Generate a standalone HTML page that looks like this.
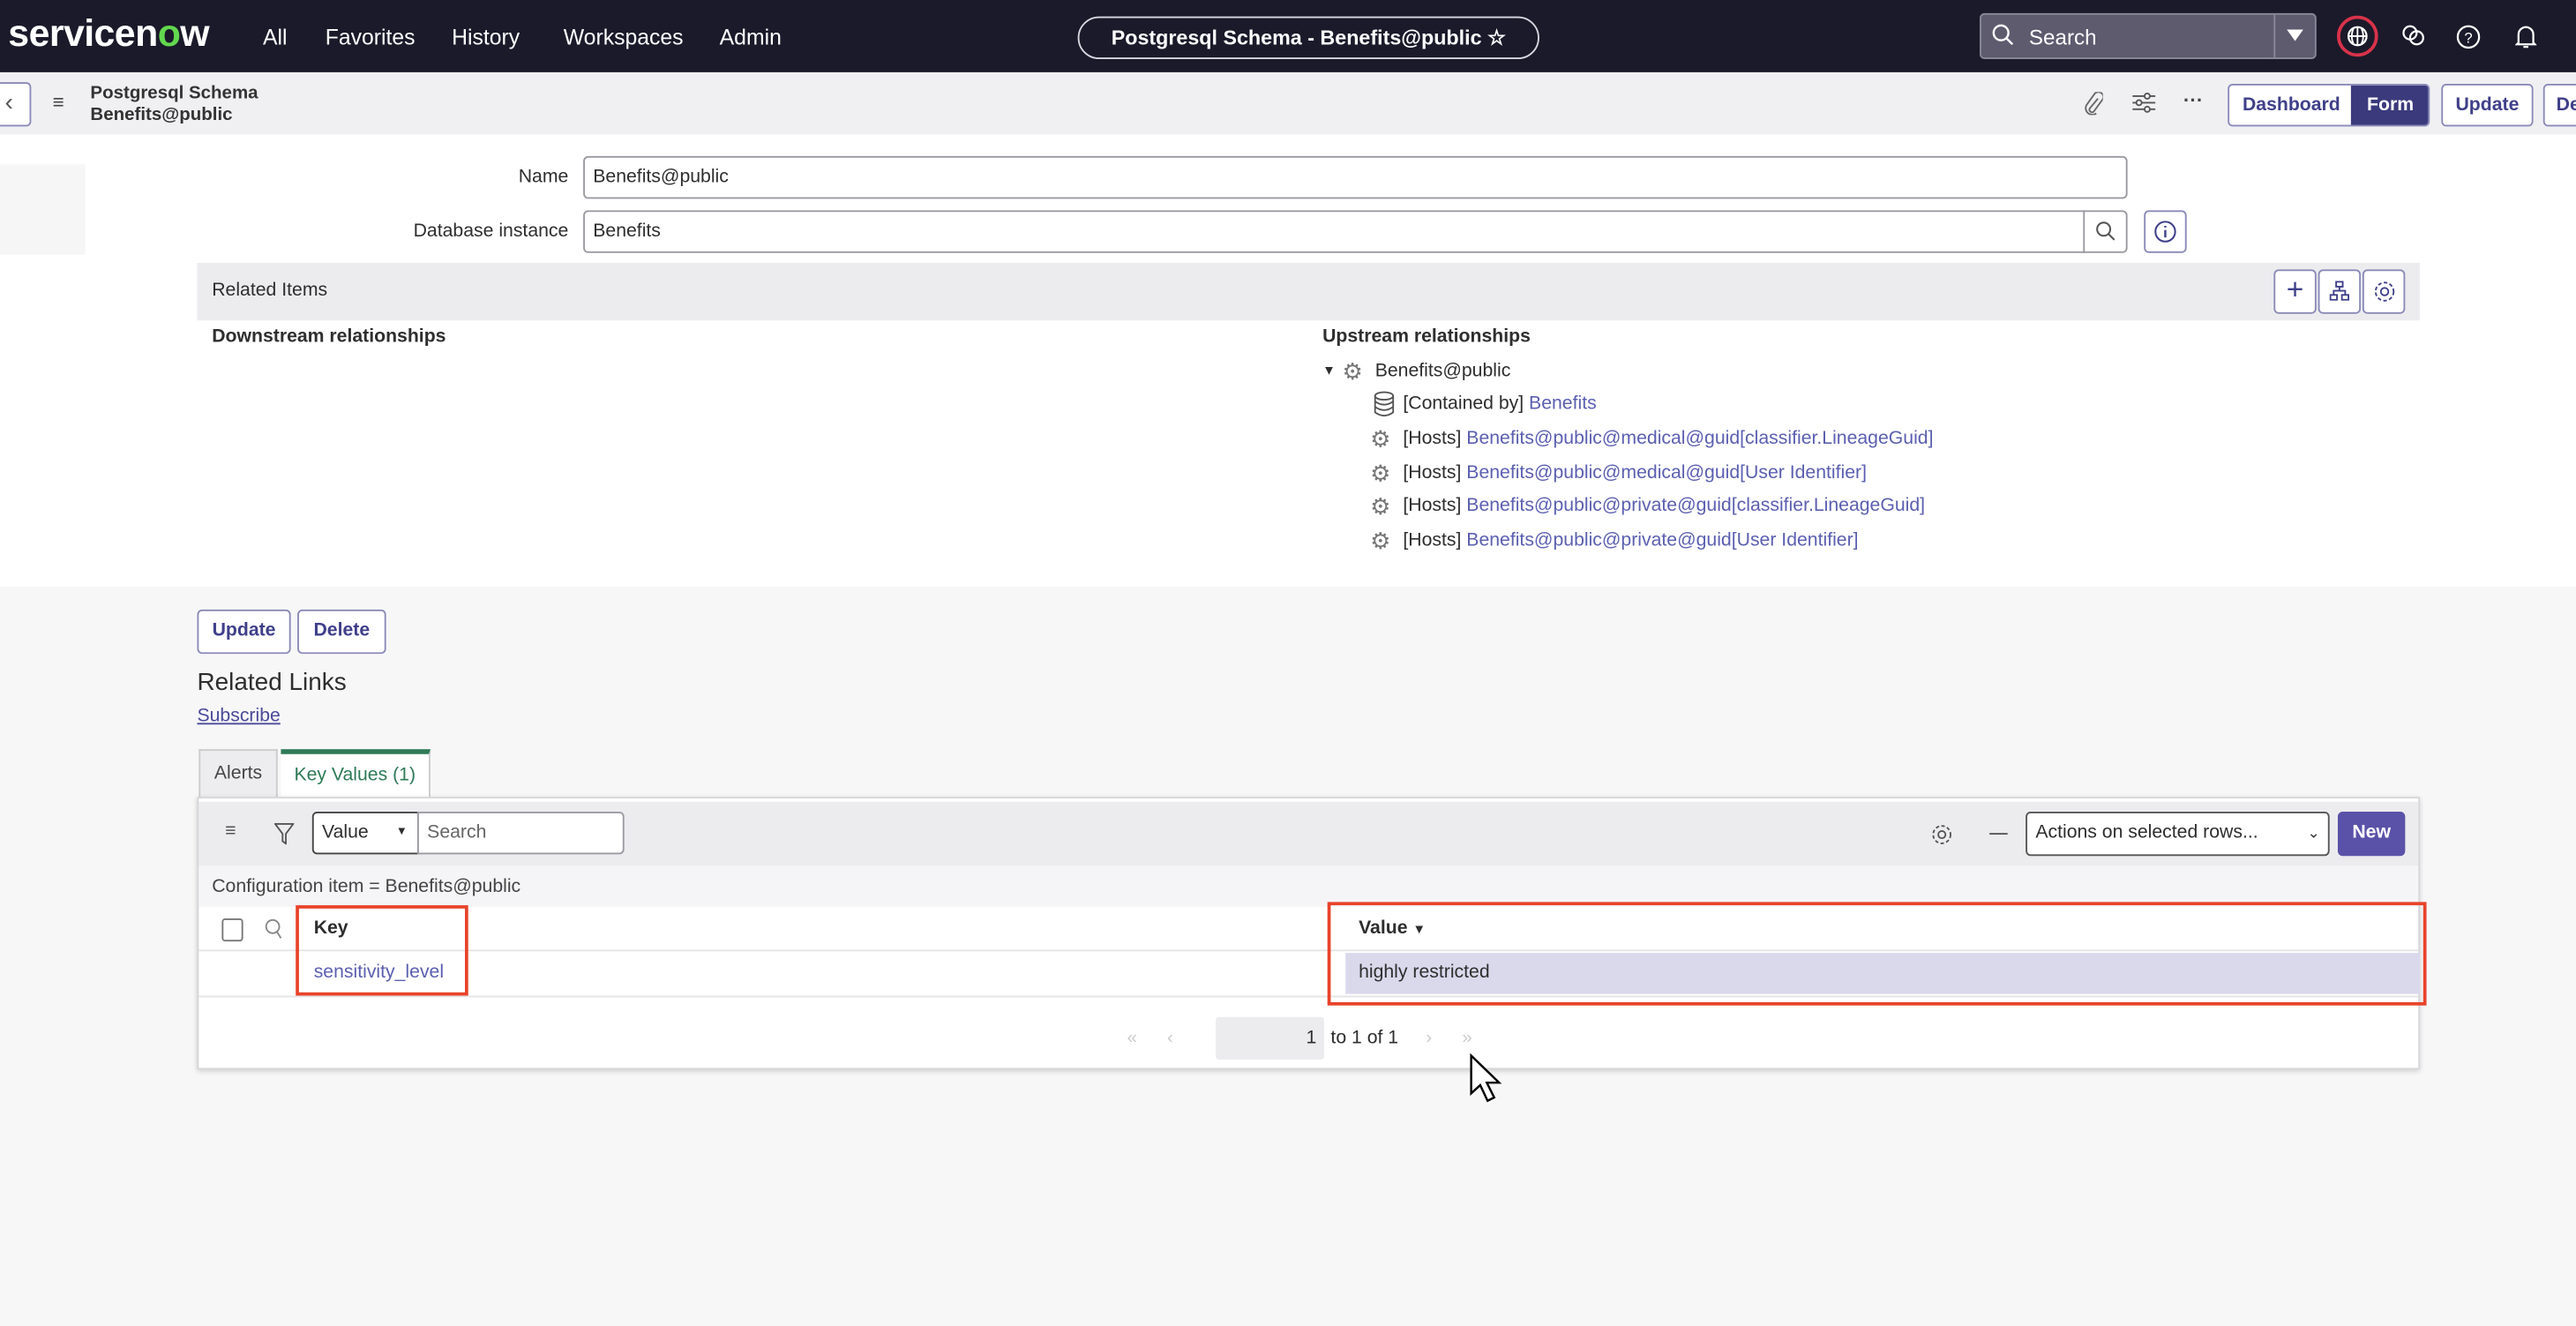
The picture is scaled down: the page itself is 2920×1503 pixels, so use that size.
<!DOCTYPE html>
<html><head><meta charset="utf-8"><style>
*{box-sizing:border-box;margin:0;padding:0}
html,body{width:2920px;height:1502px;overflow:hidden;background:#f7f7f8}
#s{position:absolute;left:0;top:0;width:1568px;height:807px;transform:scale(1.86225);transform-origin:0 0;font-family:"Liberation Sans",Arial,sans-serif;font-size:11.4px;color:#2e2e2e;background:#f7f7f8}
.a{position:absolute}
.lnk{color:#5b5fb0}
.btn{position:absolute;border:1px solid #8a8ab8;border-radius:3px;background:#fff;color:#3f3f8a;font-weight:bold;font-size:11.4px;text-align:center}
.inp{position:absolute;border:1px solid #9a9aa2;border-radius:3px;background:#fff;padding-left:5px}
svg{position:absolute}
.g{position:absolute;font-size:14px;color:#777}
</style></head><body><div id="s">
<div class="a" style="left:0;top:0;width:1568px;height:44px;background:#1b1a2a"></div>
<div class="a" style="left:5px;top:7px;color:#fff;font-size:23px;font-weight:bold;letter-spacing:-0.3px">servicen<span style="color:#62d84e">o</span>w</div>
<div class="a" style="top:15px;color:#fff;font-size:13.3px;left:160px">All</div>
<div class="a" style="top:15px;color:#fff;font-size:13.3px;left:198px">Favorites</div>
<div class="a" style="top:15px;color:#fff;font-size:13.3px;left:275px">History</div>
<div class="a" style="top:15px;color:#fff;font-size:13.3px;left:343px">Workspaces</div>
<div class="a" style="top:15px;color:#fff;font-size:13.3px;left:438px">Admin</div>
<div class="a" style="left:656px;top:10px;width:281px;height:26px;border:1px solid #d8d8e0;border-radius:13px;color:#fff;font-weight:bold;font-size:12.5px;text-align:center;line-height:24px">Postgresql Schema - Benefits@public ☆</div>
<div class="a" style="left:1205px;top:8px;width:205px;height:28px;background:#5e5b6f;border:1px solid #8a879a;border-radius:3px"></div>
<div class="a" style="left:1384px;top:9px;width:1px;height:26px;background:#8a879a"></div>
<div class="a" style="left:1235px;top:15px;color:#fff;font-size:13px">Search</div>
<svg style="left:1212px;top:14px" width="14" height="14"><circle cx="6" cy="6" r="4.5" fill="none" stroke="#fff" stroke-width="1.3"/><path d="M9.5 9.5 13 13" stroke="#fff" stroke-width="1.3"/></svg>
<svg style="left:1392px;top:18px" width="10" height="8"><path d="M0 0h10L5 7z" fill="#fff"/></svg>
<svg style="left:1422px;top:9px" width="26" height="26"><circle cx="13" cy="13" r="11.5" fill="none" stroke="#d8334a" stroke-width="2"/><circle cx="13" cy="13" r="5.5" fill="none" stroke="#fff" stroke-width="1.2"/><path d="M7.5 13h11M13 7.5v11M10.5 8.5q-2 4.5 0 9M15.5 8.5q2 4.5 0 9" fill="none" stroke="#fff" stroke-width="1"/></svg>
<svg style="left:1462px;top:15px" width="14" height="14"><circle cx="5" cy="5" r="4" fill="none" stroke="#fff" stroke-width="1.2"/><circle cx="9" cy="8" r="4" fill="none" stroke="#fff" stroke-width="1.2"/></svg>
<svg style="left:1495px;top:15px" width="15" height="15"><circle cx="7.5" cy="7.5" r="6.5" fill="none" stroke="#fff" stroke-width="1.2"/><text x="7.5" y="11" font-size="9" fill="#fff" text-anchor="middle" font-family="Liberation Sans">?</text></svg>
<svg style="left:1531px;top:15px" width="13" height="15"><path d="M2 11V6a4.5 4.5 0 0 1 9 0v5l1 1H1zM5 13.5h3" fill="none" stroke="#fff" stroke-width="1.2"/></svg>
<div class="a" style="left:0;top:44px;width:1568px;height:38px;background:#f0f0f3"></div>
<div class="a" style="left:-4px;top:50px;width:23px;height:27px;border:1px solid #8a8ab8;border-radius:3px;background:#fff"></div>
<div class="a" style="left:3px;top:54px;font-size:15px;color:#555">‹</div>
<div class="a" style="left:32px;top:55px;font-size:12px;color:#444">≡</div>
<div class="a" style="left:55px;top:51px;font-size:11px;font-weight:bold;color:#333;line-height:13px">Postgresql Schema<br>Benefits@public</div>
<svg style="left:1268px;top:56px" width="12" height="14"><path d="M9 4 4 10a1.6 1.6 0 0 0 2.4 2L11.5 5A3 3 0 0 0 7 1L2 8a4 4 0 0 0 6 5" fill="none" stroke="#666" stroke-width="1"/></svg>
<svg style="left:1298px;top:56px" width="14" height="13"><path d="M0 2.5h14M0 6.5h14M0 10.5h14" stroke="#555" stroke-width="1"/><circle cx="9" cy="2.5" r="1.6" fill="#f0f0f3" stroke="#555"/><circle cx="4" cy="6.5" r="1.6" fill="#f0f0f3" stroke="#555"/><circle cx="9" cy="10.5" r="1.6" fill="#f0f0f3" stroke="#555"/></svg>
<div class="a" style="left:1329px;top:54px;font-size:12px;color:#444;font-weight:bold">···</div>
<div class="btn" style="left:1356px;top:51px;width:123px;height:26px;line-height:24px;text-align:left;padding-left:8px;overflow:hidden">Dashboard<span style="position:absolute;left:74px;top:0;width:48px;height:24px;background:#3b3a7c;color:#fff;text-align:center">Form</span></div>
<div class="btn" style="left:1486px;top:51px;width:56px;height:26px;line-height:24px">Update</div>
<div class="btn" style="left:1548px;top:51px;width:40px;height:26px;line-height:24px;text-align:left;padding-left:7px">De</div>
<div class="a" style="left:0;top:82px;width:1568px;height:275px;background:#fff"></div>
<div class="a" style="left:0;top:100px;width:52px;height:55px;background:#f6f6f7"></div>
<div class="a" style="left:200px;top:102px;width:146px;text-align:right">Name</div>
<div class="inp" style="left:355px;top:95px;width:940px;height:26px;line-height:24px">Benefits@public</div>
<div class="a" style="left:200px;top:135px;width:146px;text-align:right">Database instance</div>
<div class="inp" style="left:355px;top:128px;width:940px;height:26px;line-height:24px">Benefits</div>
<div class="a" style="left:1268px;top:128px;width:1px;height:26px;background:#9a9aa2"></div>
<svg style="left:1275px;top:134px" width="13" height="13"><circle cx="5.5" cy="5.5" r="4" fill="none" stroke="#555" stroke-width="1.1"/><path d="M8.5 8.5 12 12" stroke="#555" stroke-width="1.1"/></svg>
<div class="btn" style="left:1305px;top:128px;width:26px;height:26px"></div>
<svg style="left:1311px;top:134px" width="14" height="14"><circle cx="7" cy="7" r="6" fill="none" stroke="#3f3f8a" stroke-width="1.1"/><path d="M7 6v4.5M7 3.5v1" stroke="#3f3f8a" stroke-width="1.3"/></svg>
<div class="a" style="left:120px;top:160px;width:1353px;height:35px;background:#ececef"></div>
<div class="a" style="left:129px;top:171px">Related Items</div>
<div class="btn" style="left:1384px;top:164px;width:26px;height:27px;font-size:18px;font-weight:normal;line-height:23px">+</div>
<div class="btn" style="left:1411px;top:164px;width:26px;height:27px"></div>
<svg style="left:1418px;top:171px" width="12" height="12"><rect x="4" y="0.5" width="4" height="3" fill="none" stroke="#3f3f8a"/><rect x="0.5" y="8.5" width="4" height="3" fill="none" stroke="#3f3f8a"/><rect x="7.5" y="8.5" width="4" height="3" fill="none" stroke="#3f3f8a"/><path d="M6 3.5v2.5M2.5 8.5V6h7v2.5" fill="none" stroke="#3f3f8a"/></svg>
<div class="btn" style="left:1438px;top:164px;width:26px;height:27px"></div>
<svg style="left:1444px;top:170px" width="15" height="15"><circle cx="7.5" cy="7.5" r="2.3" fill="none" stroke="#3f3f8a"/><circle cx="7.5" cy="7.5" r="5.5" fill="none" stroke="#3f3f8a" stroke-dasharray="2.2 1.4"/></svg>
<div class="a" style="left:129px;top:199px;font-weight:bold">Downstream relationships</div>
<div class="a" style="left:805px;top:199px;font-weight:bold">Upstream relationships</div>
<div class="a" style="left:805px;top:221px;font-size:8px">▼</div>
<div class="g" style="left:817px;top:218px">⚙</div>
<div class="a" style="left:837px;top:220px">Benefits@public</div>
<svg style="left:836px;top:238px" width="13" height="16"><ellipse cx="6.5" cy="3" rx="5.5" ry="2.3" fill="none" stroke="#555"/><path d="M1 3v10q5.5 4 11 0V3M1 6.3q5.5 4 11 0M1 9.6q5.5 4 11 0" fill="none" stroke="#555"/></svg>
<div class="a" style="left:854px;top:240px">[Contained by] <span class="lnk">Benefits</span></div>
<div class="g" style="left:834px;top:259px">⚙</div>
<div class="a" style="left:854px;top:261px">[Hosts] <span class="lnk">Benefits@public@medical@guid[classifier.LineageGuid]</span></div>
<div class="g" style="left:834px;top:280px">⚙</div>
<div class="a" style="left:854px;top:282px">[Hosts] <span class="lnk">Benefits@public@medical@guid[User Identifier]</span></div>
<div class="g" style="left:834px;top:300px">⚙</div>
<div class="a" style="left:854px;top:302px">[Hosts] <span class="lnk">Benefits@public@private@guid[classifier.LineageGuid]</span></div>
<div class="g" style="left:834px;top:321px">⚙</div>
<div class="a" style="left:854px;top:323px">[Hosts] <span class="lnk">Benefits@public@private@guid[User Identifier]</span></div>
<div class="btn" style="left:120px;top:371px;width:57px;height:27px;line-height:25px">Update</div>
<div class="btn" style="left:181px;top:371px;width:54px;height:27px;line-height:25px">Delete</div>
<div class="a" style="left:120px;top:407px;font-size:15px">Related Links</div>
<div class="a lnk" style="left:120px;top:430px;text-decoration:underline;color:#4a4a9a">Subscribe</div>
<div class="a" style="left:121px;top:456px;width:48px;height:30px;background:#ededf0;border:1px solid #ccc;border-bottom:none;line-height:28px;text-align:center;color:#444">Alerts</div>
<div class="a" style="left:171px;top:456px;width:91px;height:30px;background:#fff;border-top:3px solid #2f7a57;border-right:1px solid #ccc;line-height:26px;text-align:center;color:#2f7a57">Key Values (1)</div>
<div class="a" style="left:120px;top:485px;width:1353px;height:166px;background:#fff;border:1px solid #d6d6d9;box-shadow:0 1px 3px rgba(0,0,0,.18)"></div>
<div class="a" style="left:121px;top:488px;width:1351px;height:39px;background:#ececef"></div>
<div class="a" style="left:137px;top:500px;color:#555">≡</div>
<svg style="left:167px;top:501px" width="12" height="13"><path d="M0.5 0.5h11L7 6.5v6l-2-1.5V6.5z" fill="none" stroke="#555"/></svg>
<div class="inp" style="left:190px;top:494px;width:65px;height:26px;line-height:24px;border-color:#444;border-radius:3px 0 0 3px">Value<span style="position:absolute;right:6px;font-size:7px">▼</span></div>
<div class="inp" style="left:254px;top:494px;width:126px;height:26px;line-height:24px;color:#666;border-radius:0 3px 3px 0">Search</div>
<svg style="left:1175px;top:501px" width="14" height="14"><circle cx="7" cy="7" r="2.2" fill="none" stroke="#555"/><circle cx="7" cy="7" r="5.3" fill="none" stroke="#555" stroke-dasharray="2.1 1.4"/></svg>
<div class="a" style="left:1211px;top:507px;width:11px;height:1px;background:#555"></div>
<div class="inp" style="left:1233px;top:494px;width:185px;height:27px;line-height:25px;border-color:#555">Actions on selected rows...<span style="position:absolute;right:5px;font-size:9px">⌄</span></div>
<div class="a" style="left:1423px;top:494px;width:41px;height:27px;background:#5a52a8;border-radius:3px;color:#fff;font-weight:bold;text-align:center;line-height:27px">New</div>
<div class="a" style="left:121px;top:527px;width:1351px;height:25px;background:#f5f5f7"></div>
<div class="a" style="left:129px;top:534px;color:#444">Configuration item = Benefits@public</div>
<div class="a" style="left:121px;top:578px;width:1351px;height:1px;background:#e4e4e6"></div>
<div class="a" style="left:121px;top:606px;width:1351px;height:1px;background:#e4e4e6"></div>
<div class="a" style="left:135px;top:559px;width:13px;height:14px;border:1px solid #777;border-radius:2px"></div>
<svg style="left:161px;top:559px" width="12" height="13"><circle cx="5" cy="5" r="4" fill="none" stroke="#888"/><path d="M7.5 8 10 12" stroke="#888"/></svg>
<div class="a" style="left:191px;top:559px;font-weight:bold">Key</div>
<div class="a lnk" style="left:191px;top:586px">sensitivity_level</div>
<div class="a" style="left:827px;top:559px;font-weight:bold">Value <span style="font-size:8px">▼</span></div>
<div class="a" style="left:819px;top:580px;width:654px;height:25px;background:#dad9ec"></div>
<div class="a" style="left:827px;top:586px">highly restricted</div>
<div class="a" style="left:180px;top:551px;width:105px;height:55px;border:2px solid #e8432b"></div>
<div class="a" style="left:808px;top:549px;width:669px;height:63px;border:2px solid #e8432b"></div>
<div class="a" style="left:686px;top:626px;color:#ccc;font-size:11px">«&nbsp;&nbsp;&nbsp;&nbsp;&nbsp;&nbsp;‹</div>
<div class="a" style="left:740px;top:619px;width:66px;height:26px;background:#ececef;border-radius:2px"></div>
<div class="a" style="left:795px;top:626px">1</div>
<div class="a" style="left:810px;top:626px">to 1 of 1</div>
<div class="a" style="left:868px;top:626px;color:#ccc;font-size:11px">›&nbsp;&nbsp;&nbsp;&nbsp;&nbsp;&nbsp;»</div>
<svg style="left:894px;top:641px" width="24" height="34"><path d="M1.5 1.5v23l5.5-5 4.5 9.5 4-2-4.5-9h7.5z" fill="#fff" stroke="#000" stroke-width="1.3"/></svg>
</div></body></html>
